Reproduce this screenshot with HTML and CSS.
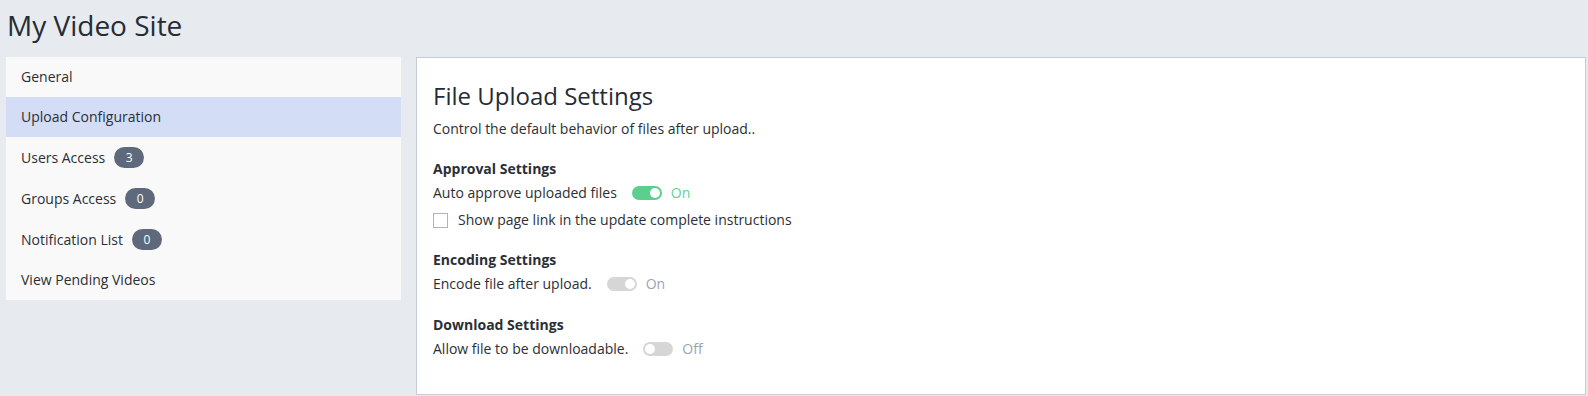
FILE: index.html
```html
<!DOCTYPE html>
<html lang="en">
<head>
    <meta charset="UTF-8">
    <meta name="viewport" content="width=device-width, initial-scale=1.0">
    <title>My Video Site</title>
    <link rel="stylesheet" href="styles.css">
</head>
<body>
    <h1 class="site-title">My Video Site</h1>
    <div class="layout">
        <ul class="side-nav">
            <li class="nav-item">General</li>
            <li class="nav-item active">Upload Configuration</li>
            <li class="nav-item">Users Access <span class="badge">3</span></li>
            <li class="nav-item">Groups Access <span class="badge">0</span></li>
            <li class="nav-item">Notification List <span class="badge">0</span></li>
            <li class="nav-item">View Pending Videos</li>
        </ul>
        <div class="panel">
            <h2>File Upload Settings</h2>
            <p class="desc">Control the default behavior of files after upload..</p>

            <div class="section">
                <div class="section-title">Approval Settings</div>
                <div class="setting-row">
                    <span class="label">Auto approve uploaded files</span>
                    <span class="toggle on"><span class="knob"></span></span>
                    <span class="state on">On</span>
                </div>
                <div class="check-row">
                    <span class="checkbox"></span>
                    <span>Show page link in the update complete instructions</span>
                </div>
            </div>

            <div class="section">
                <div class="section-title">Encoding Settings</div>
                <div class="setting-row">
                    <span class="label">Encode file after upload.</span>
                    <span class="toggle disabled"><span class="knob"></span></span>
                    <span class="state">On</span>
                </div>
            </div>

            <div class="section last">
                <div class="section-title">Download Settings</div>
                <div class="setting-row">
                    <span class="label">Allow file to be downloadable.</span>
                    <span class="toggle off"><span class="knob"></span></span>
                    <span class="state">Off</span>
                </div>
            </div>
        </div>
    </div>
</body>
</html>
```

FILE: styles.css
```css
body {
    margin: 0;
    font-family: "Open Sans", Arial, sans-serif;
    font-size: 14px;
    color: #2b2f36;
    background-color: #e7eaef;
}
.site-title {
    margin: 0 0 13px 0;
    padding: 6px 0 0 7px;
    font-size: 28px;
    font-weight: 400;
    line-height: 38px;
    color: #262c35;
}
.layout {
    display: grid;
    grid-template-columns: 395px 1fr;
    gap: 15px;
    padding: 0 2px 2px 6px;
    align-items: start;
}
.side-nav {
    list-style: none;
    margin: 0;
    padding: 0;
    background: #f9f9f9;
}
.nav-item {
    display: flex;
    align-items: center;
    min-height: 20px;
    padding: 10px 15px;
    line-height: 20px;
}
.nav-item.active {
    background-color: #d3ddf6;
}
.badge {
    display: inline-flex;
    align-items: center;
    justify-content: center;
    width: 30px;
    height: 21px;
    margin-left: 9px;
    border-radius: 11px;
    background-color: #5e6a7b;
    color: #fff;
    font-size: 12px;
}
.panel {
    background: #fff;
    border: 1px solid #c6ccd6;
    padding: 22px 16px 35px 16px;
}
h2 {
    margin: 0 0 7px 0;
    font-size: 24px;
    font-weight: 400;
    line-height: 32px;
    color: #262c35;
}
.desc {
    margin: 0;
    line-height: 20px;
}
.section {
    margin-top: 20px;
}
.section.last {
    margin-top: 21px;
}
.section-title {
    font-weight: 700;
    line-height: 20px;
}
.setting-row {
    display: flex;
    align-items: center;
    margin-top: 4px;
    line-height: 20px;
}
.label {
    margin-right: 15px;
}
.toggle {
    display: inline-flex;
    align-items: center;
    width: 30px;
    height: 14px;
    padding: 0 2px;
    box-sizing: border-box;
    border-radius: 7px;
    background-color: #d6d6d6;
}
.toggle.on {
    background-color: #5ccf8e;
    justify-content: flex-end;
}
.toggle.disabled {
    justify-content: flex-end;
}
.knob {
    width: 10px;
    height: 10px;
    border-radius: 50%;
    background: #fff;
}
.state {
    margin-left: 9px;
    color: #9ba3b4;
}
.state.on {
    color: #62d295;
}
.check-row {
    display: flex;
    align-items: center;
    margin-top: 7px;
    line-height: 20px;
}
.checkbox {
    width: 13px;
    height: 13px;
    border: 1px solid #b3b3b3;
    margin-right: 10px;
    background: #fff;
}
```
